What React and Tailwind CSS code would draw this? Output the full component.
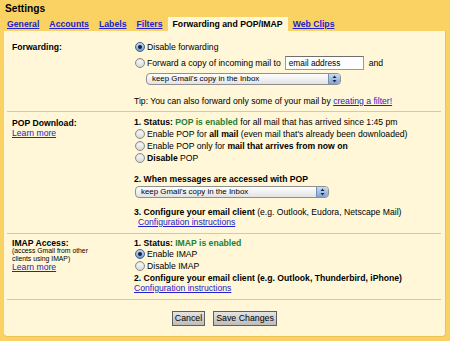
const link = 'text-[#2222cc] underline';

function Radio({ checked }) {
  if (checked) {
    return (
      <span className="ml-[1px] flex h-[10px] w-[10px] shrink-0 items-center justify-center rounded-full border border-[#3f5f8c] bg-gradient-to-b from-[#c9dcf2] to-[#6f9bd4]">
        <span className="h-[4px] w-[4px] rounded-full bg-[#13203a]" />
      </span>
    );
  }
  return (
    <span className="ml-[1px] h-[10px] w-[10px] shrink-0 rounded-full border border-[#8a8a8a] bg-gradient-to-b from-white to-[#d8d8d8] shadow-[inset_0_1px_1px_rgba(0,0,0,0.15)]" />
  );
}

function Select({ className }) {
  return (
    <div className={`flex h-[12px] overflow-hidden rounded-[4px] border border-[#8f8f8f] bg-gradient-to-b from-white to-[#e2e2e2] ${className}`}>
      <span className="flex-1 pl-[5px] text-[7.9px] leading-[10px]">keep Gmail's copy in the Inbox</span>
      <span className="flex w-[12px] items-center justify-center border-l border-[#7a8fb0] bg-gradient-to-b from-[#cadcf1] to-[#7ea3d3]">
        <svg width="5" height="8" viewBox="0 0 5 8">
          <path d="M2.5 0.5L4.5 3H0.5z M2.5 7.5L4.5 5H0.5z" fill="#1b2a44" />
        </svg>
      </span>
    </div>
  );
}

function Row({ checked, children }) {
  return (
    <div className="flex h-[12px] items-center gap-[2px]">
      <Radio checked={checked} />
      <span>{children}</span>
    </div>
  );
}

export default function App() {
  const tabs = ['General', 'Accounts', 'Labels', 'Filters'];
  return (
    <div className="h-[341px] w-[450px] overflow-hidden bg-[#fad163] font-['Liberation_Sans',Arial,sans-serif] text-[8.65px] text-black">
      <div className="pl-[5px] pt-[3px] text-[10.2px] font-bold leading-[12px]">Settings</div>

      <div className="mt-[2px] flex h-[14px] pl-[2px] text-[8.7px] font-bold leading-[14px]">
        {tabs.map((t) => (
          <a key={t} className={`px-[5px] ${link}`}>{t}</a>
        ))}
        <span className="bg-[#fff7d7] px-[5px]">Forwarding and POP/IMAP</span>
        <a className={`px-[5px] ${link}`}>Web Clips</a>
      </div>

      <div className="ml-[4px] flex h-[306px] w-[442px] flex-col rounded-b-[4px] border-r border-b border-[#eec257] bg-[#fff7d7]">
        {/* forwarding */}
        <div className="ml-[3px] mr-[4px] grid grid-cols-[127px_1fr] border-b border-[#f5c857] pt-[10px] pb-[4px]">
          <div className="pl-[5px] font-bold leading-[12px]">Forwarding:</div>
          <div>
            <Row checked>Disable forwarding</Row>
            <div className="mt-[3px] flex h-[14px] items-center gap-[2px]">
              <Radio />
              <span>Forward a copy of incoming mail to</span>
              <span className="ml-[2px] flex h-[14px] w-[79px] items-center border border-[#9a9a9a] border-t-[#6e6e6e] bg-white pl-[3px] text-[8.3px]">
                email address
              </span>
              <span className="ml-[3px]">and</span>
            </div>
            <Select className="mt-[3px] ml-[12px] w-[195px]" />
            <div className="mt-[10px] leading-[12px]">
              Tip: You can also forward only some of your mail by <a className={link}>creating a filter!</a>
            </div>
          </div>
        </div>

        {/* pop */}
        <div className="ml-[3px] mr-[4px] grid grid-cols-[127px_1fr] border-b border-[#f5c857] pt-[5px] pb-[6px]">
          <div className="pl-[5px] pt-[1px] leading-[10px]">
            <div className="font-bold">POP Download:</div>
            <a className={link}>Learn more</a>
          </div>
          <div>
            <div className="leading-[11px]">
              <b>1. Status: </b>
              <b className="text-[#1d7f35]">POP is enabled</b> for all mail that has arrived since 1:45 pm
            </div>
            <Row>
              Enable POP for <b>all mail</b> (even mail that's already been downloaded)
            </Row>
            <Row>
              Enable POP only for <b>mail that arrives from now on</b>
            </Row>
            <Row>
              <b>Disable</b> POP
            </Row>
            <div className="mt-[10px] font-bold leading-[11px]">2. When messages are accessed with POP</div>
            <Select className="mt-[1px] ml-[1px] w-[194px]" />
            <div className="mt-[9px] leading-[10px]">
              <b>3. Configure your email client</b> (e.g. Outlook, Eudora, Netscape Mail)
            </div>
            <a className={`ml-[4px] block leading-[10px] ${link}`}>Configuration instructions</a>
          </div>
        </div>

        {/* imap */}
        <div className="ml-[3px] mr-[4px] grid grid-cols-[127px_1fr] border-b border-[#f5c857] pt-[4px] pb-[6px]">
          <div className="pl-[5px]">
            <div className="font-bold leading-[10px]">IMAP Access:</div>
            <div className="-mt-px text-[6.8px] leading-[8px]">
              (access Gmail from other
              <br />
              clients using IMAP)
            </div>
            <a className={`block leading-[9px] ${link}`}>Learn more</a>
          </div>
          <div>
            <div className="font-bold leading-[10px]">
              1. Status: <span className="text-[#1d7f35]">IMAP is enabled</span>
            </div>
            <Row checked>Enable IMAP</Row>
            <Row>Disable IMAP</Row>
            <div className="mt-[1px] font-bold leading-[10px]">
              2. Configure your email client (e.g. Outlook, Thunderbird, iPhone)
            </div>
            <a className={`block leading-[10px] ${link}`}>Configuration instructions</a>
          </div>
        </div>

        <div className="flex justify-center gap-[8px] pt-[11px]">
          <button className="h-[15px] w-[33px] border border-[#5f5f5f] bg-gradient-to-b from-[#e4e4e4] to-[#bcbcbc] text-[8.8px] leading-[13px]">
            Cancel
          </button>
          <button className="h-[15px] w-[64px] border border-[#5f5f5f] bg-gradient-to-b from-[#e4e4e4] to-[#bcbcbc] text-[8.8px] leading-[13px]">
            Save Changes
          </button>
        </div>
      </div>
    </div>
  );
}
